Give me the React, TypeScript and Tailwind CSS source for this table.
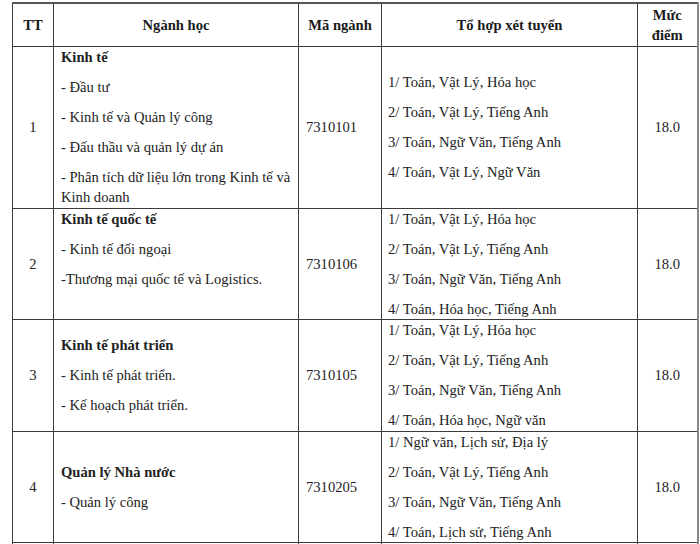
type Row = {
  tt: string
  title: string
  items: string[]
  code: string
  combos: string[]
  score: string
  height: string
  topAlign?: boolean
}

const ROWS: Row[] = [
  {
    tt: "1",
    title: "Kinh tế",
    items: [
      "- Đầu tư",
      "- Kinh tế và Quản lý công",
      "- Đấu thầu và quản lý dự án",
      "- Phân tích dữ liệu lớn trong Kinh tế và Kinh doanh",
    ],
    code: "7310101",
    combos: ["1/ Toán, Vật Lý, Hóa học", "2/ Toán, Vật Lý, Tiếng Anh", "3/ Toán, Ngữ Văn, Tiếng Anh", "4/ Toán, Vật Lý, Ngữ Văn"],
    score: "18.0",
    height: "h-[162px]",
  },
  {
    tt: "2",
    title: "Kinh tế quốc tế",
    items: ["- Kinh tế đối ngoại", "-Thương mại quốc tế và Logistics."],
    code: "7310106",
    combos: ["1/ Toán, Vật Lý, Hóa học", "2/ Toán, Vật Lý, Tiếng Anh", "3/ Toán, Ngữ Văn, Tiếng Anh", "4/ Toán, Hóa học, Tiếng Anh"],
    score: "18.0",
    height: "h-[111px]",
    topAlign: true,
  },
  {
    tt: "3",
    title: "Kinh tế phát triển",
    items: ["- Kinh tế phát triển.", "- Kế hoạch phát triển."],
    code: "7310105",
    combos: ["1/ Toán, Vật Lý, Hóa học", "2/ Toán, Vật Lý, Tiếng Anh", "3/ Toán, Ngữ Văn, Tiếng Anh", "4/ Toán, Hóa học, Ngữ văn"],
    score: "18.0",
    height: "h-[112px]",
  },
  {
    tt: "4",
    title: "Quản lý Nhà nước",
    items: ["- Quản lý công"],
    code: "7310205",
    combos: ["1/ Ngữ văn, Lịch sử, Địa lý", "2/ Toán, Vật Lý, Tiếng Anh", "3/ Toán, Ngữ Văn, Tiếng Anh", "4/ Toán, Lịch sử, Tiếng Anh"],
    score: "18.0",
    height: "h-[111px]",
  },
]

const cell = "border border-[#3a3a3a] p-0 align-middle"

export default function App() {
  return (
    <div className="min-h-screen bg-white pl-[12px] pt-[2px] font-['Liberation_Serif','Times_New_Roman',serif] text-[14.6px] leading-[20px] text-[#222]">
      <table className="w-[685px] table-fixed border-collapse border-t-2 border-r-2 border-t-[#555] border-r-[#888]">
        <colgroup>
          <col className="w-[41px]" />
          <col className="w-[245px]" />
          <col className="w-[83px]" />
          <col className="w-[256px]" />
          <col className="w-[60px]" />
        </colgroup>
        <thead>
          <tr className="h-[43px] font-bold text-[#1a1a1a]">
            <th className={`${cell} text-center`}>TT</th>
            <th className={`${cell} text-center`}>Ngành học</th>
            <th className={`${cell} text-center`}>Mã ngành</th>
            <th className={`${cell} text-center`}>Tổ hợp xét tuyển</th>
            <th className={`${cell} text-center`}>
              Mức
              <br />
              điểm
            </th>
          </tr>
        </thead>
        <tbody>
          {ROWS.map((row) => (
            <tr key={row.tt} className={row.height}>
              <td className={`${cell} text-center`}>{row.tt}</td>
              <td className={`${cell} px-[7px] ${row.topAlign ? "align-top" : ""}`}>
                <div className="flex flex-col gap-[10px]">
                  <p className="font-bold">{row.title}</p>
                  {row.items.map((item) => (
                    <p key={item}>{item}</p>
                  ))}
                </div>
              </td>
              <td className={`${cell} px-[7px]`}>{row.code}</td>
              <td className={`${cell} px-[6px]`}>
                <div className="flex flex-col gap-[10px]">
                  {row.combos.map((c) => (
                    <p key={c}>{c}</p>
                  ))}
                </div>
              </td>
              <td className={`${cell} text-center`}>{row.score}</td>
            </tr>
          ))}
          <tr className="h-[40px]">
            <td className={cell}></td>
            <td className={cell}></td>
            <td className={cell}></td>
            <td className={cell}></td>
            <td className={cell}></td>
          </tr>
        </tbody>
      </table>
    </div>
  )
}
